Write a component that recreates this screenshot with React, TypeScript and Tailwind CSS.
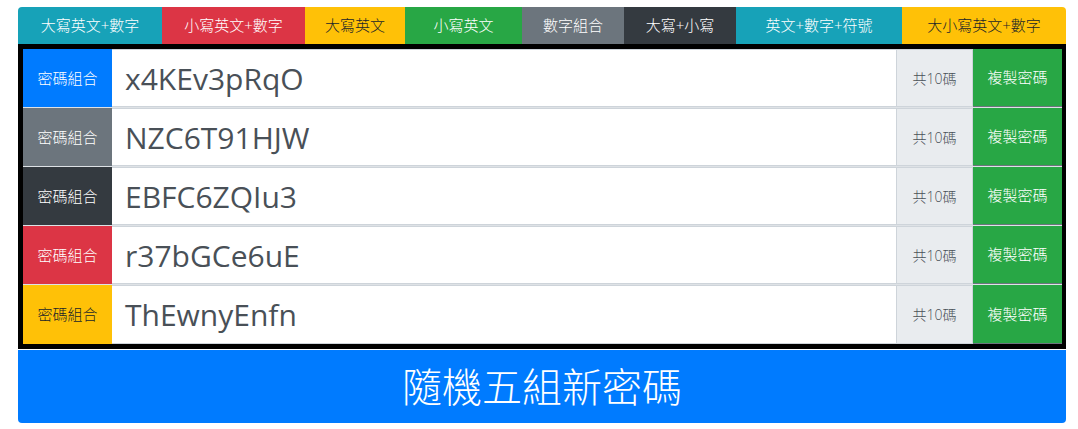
import React from "react";

const TABS = [
  { label: "大寫英文+數字", w: "w-[144px]", cls: "bg-[#17a2b8] text-white" },
  { label: "小寫英文+數字", w: "w-[143px]", cls: "bg-[#dc3545] text-white" },
  { label: "大寫英文", w: "w-[100px]", cls: "bg-[#ffc107] text-[#212529]" },
  { label: "小寫英文", w: "w-[117px]", cls: "bg-[#28a745] text-white" },
  { label: "數字組合", w: "w-[102px]", cls: "bg-[#6c757d] text-white" },
  { label: "大寫+小寫", w: "w-[112px]", cls: "bg-[#343a40] text-white" },
  { label: "英文+數字+符號", w: "w-[166px]", cls: "bg-[#17a2b8] text-white" },
  { label: "大小寫英文+數字", w: "w-[164px]", cls: "bg-[#ffc107] text-[#212529]" },
];

const ROWS = [
  { pw: "x4KEv3pRqO", cls: "bg-[#007bff] text-white" },
  { pw: "NZC6T91HJW", cls: "bg-[#6c757d] text-white" },
  { pw: "EBFC6ZQIu3", cls: "bg-[#343a40] text-white" },
  { pw: "r37bGCe6uE", cls: "bg-[#dc3545] text-white" },
  { pw: "ThEwnyEnfn", cls: "bg-[#ffc107] text-[#212529]" },
];

export default function App() {
  return (
    <div className="min-h-screen bg-white pl-[18px] pt-[7px] font-['Open_Sans','Noto_Sans_CJK_TC',sans-serif] font-light">
      <div className="w-[1048px]">
        {/* type tabs */}
        <div className="flex h-[37px] overflow-hidden rounded-t-[4px]">
          {TABS.map((t) => (
            <div
              key={t.label}
              className={`${t.w} ${t.cls} flex shrink-0 items-center justify-center text-[15px]`}
            >
              {t.label}
            </div>
          ))}
        </div>

        {/* password rows */}
        <div className="border-[5px] border-r-[4px] border-black bg-white">
          {ROWS.map((r, i) => (
            <div
              key={r.pw}
              className={`flex h-[59px] ${i < ROWS.length - 1 ? "border-b border-[#dee2e6]" : ""}`}
            >
              <div className={`${r.cls} flex w-[89px] shrink-0 items-center justify-center text-[15px]`}>
                密碼組合
              </div>
              <div className="flex flex-1 items-center border border-[#ced4da] border-l-0 pl-[13px] text-[30px] font-normal text-[#495057]">
                {r.pw}
              </div>
              <div className="flex w-[76px] shrink-0 items-center justify-center border border-[#ced4da] border-l-0 bg-[#e9ecef] text-[14px] text-[#495057]">
                共10碼
              </div>
              <div className="flex w-[89px] shrink-0 items-center justify-center border-b border-[#6c757d] bg-[#28a745] text-[15px] text-white">
                複製密碼
              </div>
            </div>
          ))}
        </div>

        {/* generate button */}
        <button className="mt-px flex h-[73px] w-full items-center justify-center rounded-b-[4px] bg-[#007bff] text-[40px] text-white">
          隨機五組新密碼
        </button>
      </div>
    </div>
  );
}
